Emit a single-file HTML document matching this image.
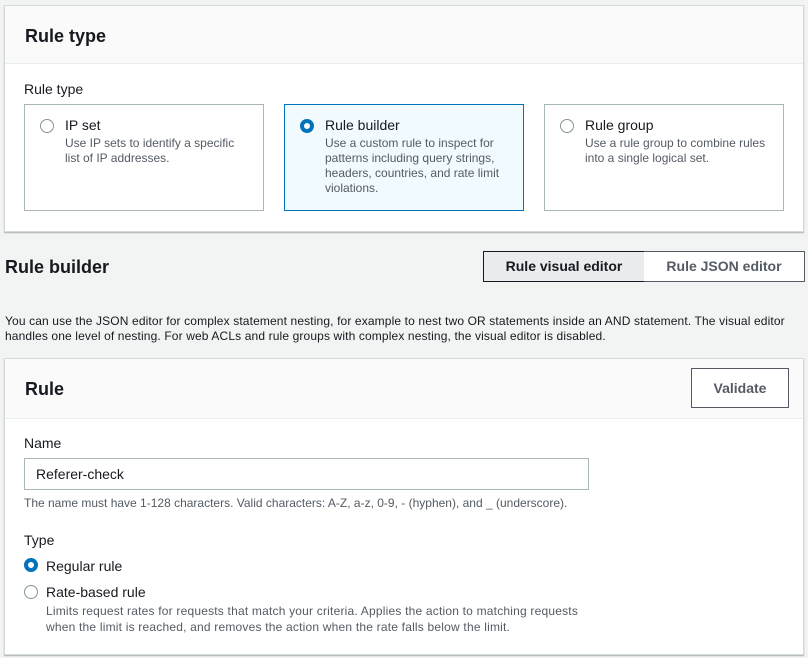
<!DOCTYPE html>
<html><head><style>
*{box-sizing:border-box;margin:0;padding:0}
body{width:808px;height:658px;background:#f2f3f3;font-family:"Liberation Sans",sans-serif;color:#16191f;position:relative;overflow:hidden;font-size:14px}
.abs{position:absolute}
.panel{position:absolute;left:4px;width:800px;background:#fff;border:1px solid #d5dbdb;box-shadow:0 1px 1px rgba(0,28,36,.3)}
.hdr{background:#fafafa;border-bottom:1px solid #eaeded;position:absolute;left:0;right:0;top:0}
h2{font-size:18px;font-weight:bold;position:absolute}
.tile{position:absolute;top:104px;width:240px;height:107px;border:1px solid #aab7b8;background:#fff}
.tile.sel{border-color:#0073bb;background:#f1faff}
.rad{position:absolute;width:14px;height:14px;border-radius:50%;border:1.5px solid #879596;background:#fff}
.rad.on{border:4px solid #0073bb}
.t{position:absolute;font-size:14px}
.d{position:absolute;font-size:12px;color:#545b64;line-height:15px}
</style></head><body>
<div class="panel" style="top:5px;height:227px">
 <div class="hdr" style="height:58px"></div>
 <h2 style="left:20px;top:20px">Rule type</h2>
</div>
<div class="t" style="left:24px;top:81px">Rule type</div>
<div class="tile" style="left:24px"><div class="rad" style="left:15px;top:14px"></div><div class="t" style="left:40px;top:12px">IP set</div><div class="d" style="left:40px;top:31px">Use IP sets to identify a specific<br>list of IP addresses.</div></div>
<div class="tile sel" style="left:284px"><div class="rad on" style="left:15px;top:14px"></div><div class="t" style="left:40px;top:12px">Rule builder</div><div class="d" style="left:40px;top:31px">Use a custom rule to inspect for<br>patterns including query strings,<br>headers, countries, and rate limit<br>violations.</div></div>
<div class="tile" style="left:544px;width:240px"><div class="rad" style="left:15px;top:14px"></div><div class="t" style="left:40px;top:12px">Rule group</div><div class="d" style="left:40px;top:31px">Use a rule group to combine rules<br>into a single logical set.</div></div>

<h2 style="left:5px;top:257px">Rule builder</h2>
<div class="abs" style="left:483px;top:251px;width:162px;height:31px;border:1px solid #16191f;background:#eaeded;font-weight:bold;font-size:14px;text-align:center;line-height:29px">Rule visual editor</div>
<div class="abs" style="left:644px;top:251px;width:161px;height:31px;border:1px solid #545b64;border-left:none;background:#fff;font-weight:bold;font-size:14px;text-align:center;line-height:29px;color:#545b64">Rule JSON editor</div>
<div class="abs" style="left:5px;top:314px;font-size:12px;line-height:15px;color:#16191f;letter-spacing:0.13px;white-space:nowrap">You can use the JSON editor for complex statement nesting, for example to nest two OR statements inside an AND statement. The visual editor<br>handles one level of nesting. For web ACLs and rule groups with complex nesting, the visual editor is disabled.</div>

<div class="panel" style="top:358px;height:297px">
 <div class="hdr" style="height:60px"></div>
 <h2 style="left:20px;top:20px">Rule</h2>
 <div class="abs" style="left:686px;top:9px;width:98px;height:40px;border:1px solid #545b64;background:#fff;font-weight:bold;font-size:14px;color:#545b64;text-align:center;line-height:38px">Validate</div>
</div>
<div class="t" style="left:24px;top:435px">Name</div>
<div class="abs" style="left:24px;top:458px;width:565px;height:32px;border:1px solid #aab7b8;background:#fff;padding-left:11px;line-height:30px;font-size:14px">Referer-check</div>
<div class="d" style="left:24px;top:496px;font-size:12px;white-space:nowrap">The name must have 1-128 characters. Valid characters: A-Z, a-z, 0-9, - (hyphen), and _ (underscore).</div>
<div class="t" style="left:24px;top:532px">Type</div>
<div class="rad on" style="left:24px;top:558px"></div><div class="t" style="left:46px;top:558px">Regular rule</div>
<div class="rad" style="left:24px;top:585px"></div><div class="t" style="left:46px;top:584px">Rate-based rule</div>
<div class="d" style="left:46px;top:603px;font-size:12px;line-height:16px;letter-spacing:0.2px;white-space:nowrap">Limits request rates for requests that match your criteria. Applies the action to matching requests<br>when the limit is reached, and removes the action when the rate falls below the limit.</div>
</body></html>
